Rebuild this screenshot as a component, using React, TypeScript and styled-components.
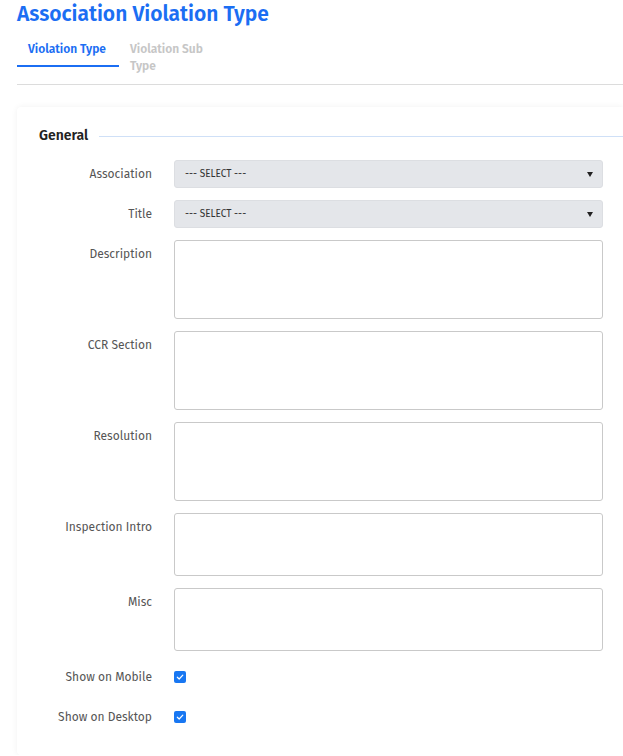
import React from "react";
import styled, { createGlobalStyle } from "styled-components";

const Global = createGlobalStyle`
  html, body { margin: 0; padding: 0; background: #fff; overflow: hidden; }
  body { font-family: "Fira Sans", Roboto, "Noto Sans", sans-serif; }
  * { box-sizing: border-box; }
`;

const Page = styled.div`
  padding: 0 0 0 17px;
  width: 623px;
`;

const Title = styled.h1`
  margin: 0;
  font-size: 21px;
  line-height: 28px;
  font-weight: 600;
  color: #1b6ef3;
`;

const Tabs = styled.div`
  display: flex;
  align-items: flex-start;
  margin-top: 8px;
  height: 49px;
  border-bottom: 1px solid #dcdcdc;
`;

const Tab = styled.div<{ $active?: boolean }>`
  width: 102px;
  padding: 5px 11px 7px;
  font-size: 12px;
  font-weight: 600;
  line-height: 17px;
  color: ${(p) => (p.$active ? "#1b6ef3" : "#c6c6c6")};
  border-bottom: 2px solid ${(p) => (p.$active ? "#1b6ef3" : "transparent")};
`;

const Card = styled.div`
  margin-top: 22px;
  background: #fff;
  border-radius: 4px 0 0 4px;
  box-shadow: 0 0 6px rgba(0, 0, 0, 0.06);
  padding: 20px 20px 24px 22px;
`;

const Legend = styled.div`
  display: flex;
  align-items: center;
  gap: 11px;
  font-size: 14px;
  font-weight: 600;
  color: #222;
  line-height: 18px;
  margin-bottom: 15px;
  &::after {
    content: "";
    flex: 1;
    height: 1px;
    background: #cfe0f7;
    margin-right: -20px;
  }
`;

const Form = styled.div`
  display: grid;
  grid-template-columns: 113px 1fr;
  column-gap: 22px;
  row-gap: 12px;
`;

const Label = styled.label`
  text-align: right;
  font-size: 12px;
  line-height: 28px;
  color: #555;
`;

const SelectBox = styled.div`
  position: relative;
  height: 28px;
  background: #e4e6ea;
  border: 1px solid #dcdee2;
  border-radius: 3px;
  font-size: 10px;
  color: #333;
  display: flex;
  align-items: center;
  padding-left: 10px;
`;

const Arrow = styled.span`
  position: absolute;
  right: 9px;
  top: 11px;
  width: 0;
  height: 0;
  border-left: 3px solid transparent;
  border-right: 3px solid transparent;
  border-top: 5px solid #222;
`;

const Area = styled.textarea<{ $h: number }>`
  height: ${(p) => p.$h}px;
  border: 1px solid #c9c9c9;
  border-radius: 3px;
  resize: none;
  font-family: inherit;
  display: block;
  width: 100%;
`;

const CheckCell = styled.div`
  height: 28px;
  display: flex;
  align-items: center;
`;

const Check = styled.span`
  width: 12px;
  height: 12px;
  border-radius: 2px;
  background: #1877f2;
  display: flex;
  align-items: center;
  justify-content: center;
`;

const Tick = () => (
  <svg width="8" height="8" viewBox="0 0 8 8">
    <path d="M1.3 4.2 L3.2 6 L6.8 2.2" fill="none" stroke="#fff" strokeWidth="1.2" strokeLinecap="round" strokeLinejoin="round" />
  </svg>
);

const Select = () => (
  <SelectBox>
    --- SELECT ---
    <Arrow />
  </SelectBox>
);

export default function App() {
  return (
    <Page>
      <Global />
      <Title>Association Violation Type</Title>
      <Tabs>
        <Tab $active>Violation Type</Tab>
        <Tab>Violation Sub Type</Tab>
      </Tabs>
      <Card>
        <Legend>General</Legend>
        <Form>
          <Label>Association</Label>
          <Select />
          <Label>Title</Label>
          <Select />
          <Label>Description</Label>
          <Area $h={79} />
          <Label>CCR Section</Label>
          <Area $h={79} />
          <Label>Resolution</Label>
          <Area $h={79} />
          <Label>Inspection Intro</Label>
          <Area $h={63} />
          <Label>Misc</Label>
          <Area $h={63} />
          <Label>Show on Mobile</Label>
          <CheckCell>
            <Check>
              <Tick />
            </Check>
          </CheckCell>
          <Label>Show on Desktop</Label>
          <CheckCell>
            <Check>
              <Tick />
            </Check>
          </CheckCell>
        </Form>
      </Card>
    </Page>
  );
}
